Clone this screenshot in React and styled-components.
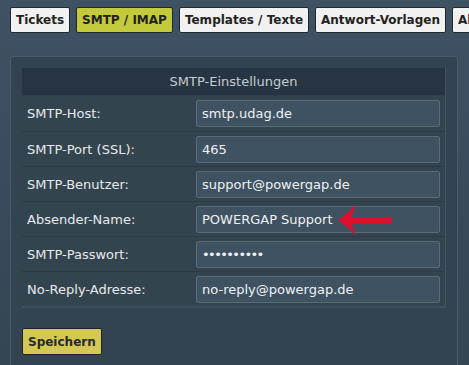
import React from "react";
import styled, { createGlobalStyle } from "styled-components";

const GlobalStyle = createGlobalStyle`
  html, body {
    margin: 0;
    padding: 0;
    overflow: hidden;
  }
  body {
    background: linear-gradient(180deg, #3f5264 0%, #38495a 60%, #354553 100%);
    font-family: "DejaVu Sans", Verdana, sans-serif;
  }
`;

const Page = styled.div`
  width: 469px;
  height: 365px;
  overflow: hidden;
  padding: 7px 11px 0 10px;
  box-sizing: border-box;
`;

const TabBar = styled.div`
  display: flex;
  gap: 6px;
  white-space: nowrap;
  width: 600px;
`;

const Tab = styled.div`
  height: 26px;
  box-sizing: border-box;
  padding: 0 5px;
  display: flex;
  align-items: center;
  background: ${(p) => (p.active ? "#c3ca3c" : "#f1f1f1")};
  border: 1px solid #1d2831;
  border-radius: 2px;
  font-family: "DejaVu Sans", sans-serif;
  font-weight: bold;
  font-size: 12px;
  color: #222;
  flex-shrink: 0;
`;

const Panel = styled.div`
  margin-top: 23px;
  background: #33434f;
  border: 1px solid #4a5c6a;
  border-bottom: none;
  border-radius: 4px 4px 0 0;
  padding: 11px 11px 40px;
`;

const Table = styled.div`
  background: #34444f;
  border-right: 1px solid #44555f;
  border-bottom: 2px solid #3e4f5c;
`;

const Header = styled.div`
  height: 28px;
  background: #263541;
  color: #c3ccd4;
  font-size: 13px;
  display: flex;
  align-items: center;
  justify-content: center;
  border-bottom: 1px solid #2f3f4b;
  box-sizing: border-box;
`;

const Row = styled.div`
  height: 35px;
  box-sizing: border-box;
  display: grid;
  grid-template-columns: 174px 1fr;
  align-items: center;
  border-top: ${(p) => (p.first ? "none" : "1px solid #2b3a46")};
`;

const Label = styled.div`
  padding-left: 5px;
  color: #e6eaed;
  font-size: 13px;
`;

const FieldWrap = styled.div`
  position: relative;
  padding-right: 5px;
`;

const Field = styled.input`
  display: block;
  width: 100%;
  height: 27px;
  box-sizing: border-box;
  background: #3f5262;
  border: 1px solid #5a6b78;
  border-radius: 2px;
  color: #eef1f3;
  font-family: "DejaVu Sans", Verdana, sans-serif;
  font-size: 13px;
  padding: 0 5px;
  outline: none;
  letter-spacing: ${(p) => (p.type === "password" ? "-1.6px" : "normal")};
`;

const Arrow = styled.svg`
  position: absolute;
  left: 142px;
  top: -1px;
  width: 56px;
  height: 30px;
  overflow: visible;
`;

const SaveButton = styled.button`
  margin-top: 20px;
  height: 27px;
  padding: 0 5px;
  background: #d3c853;
  border: 1px solid #1d2528;
  border-radius: 2px;
  font-family: "DejaVu Sans", sans-serif;
  font-weight: bold;
  font-size: 12px;
  color: #2a2a2a;
`;

const tabs = ["Tickets", "SMTP / IMAP", "Templates / Texte", "Antwort-Vorlagen", "Allgemein"];

const fields = [
  { label: "SMTP-Host:", value: "smtp.udag.de" },
  { label: "SMTP-Port (SSL):", value: "465" },
  { label: "SMTP-Benutzer:", value: "support@powergap.de" },
  { label: "Absender-Name:", value: "POWERGAP Support", arrow: true },
  { label: "SMTP-Passwort:", value: "geheim1234", type: "password" },
  { label: "No-Reply-Adresse:", value: "no-reply@powergap.de" },
];

export default function App() {
  return (
    <Page>
      <GlobalStyle />
      <TabBar>
        {tabs.map((t) => (
          <Tab key={t} active={t === "SMTP / IMAP"}>
            {t}
          </Tab>
        ))}
      </TabBar>
      <Panel>
        <Table>
          <Header>SMTP-Einstellungen</Header>
          {fields.map((f, i) => (
            <Row key={f.label} first={i === 0}>
              <Label>{f.label}</Label>
              <FieldWrap>
                <Field type={f.type || "text"} value={f.value} readOnly />
                {f.arrow && (
                  <Arrow viewBox="0 0 56 30">
                    <path
                      d="M0 15 C6 11 12 6 17 0 C16 5 15 9 13.5 12 L54 12 L54 18 L13.5 18 C15 21 16 25 17 30 C12 24 6 19 0 15 Z"
                      fill="#dc0f2e"
                    />
                  </Arrow>
                )}
              </FieldWrap>
            </Row>
          ))}
        </Table>
        <SaveButton>Speichern</SaveButton>
      </Panel>
    </Page>
  );
}
